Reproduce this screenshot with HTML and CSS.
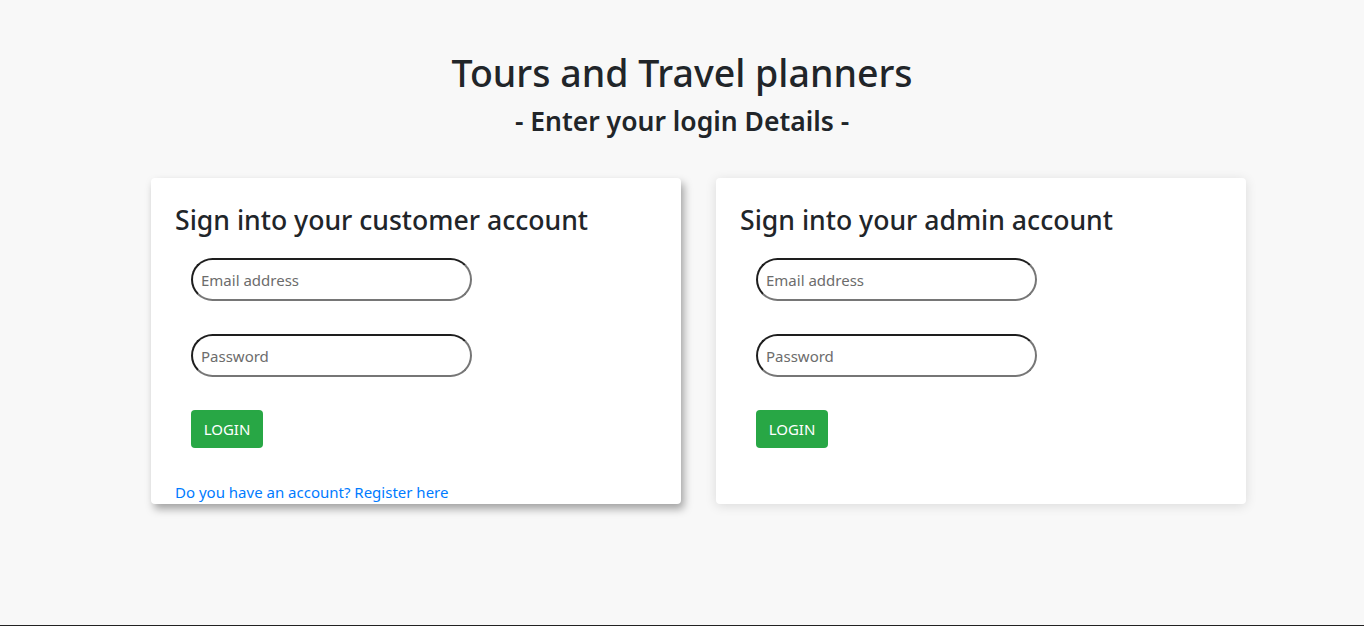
FILE: index.html
```html
<!DOCTYPE html>
<html lang="en">
<head>
<meta charset="utf-8">
<title>Tours and Travel planners</title>
<link rel="stylesheet" href="styles.css">
</head>
<body>
<header class="page-head">
  <h1 class="title">Tours and Travel planners</h1>
  <h2 class="subtitle">- Enter your login Details -</h2>
</header>
<main class="cards">
  <section class="card card-active">
    <h3 class="card-title">Sign into your customer account</h3>
    <form class="login-form">
      <input class="field" type="email" placeholder="Email address">
      <input class="field" type="password" placeholder="Password">
      <button class="btn-login" type="button">LOGIN</button>
    </form>
    <a class="register" href="#">Do you have an account? Register here</a>
  </section>
  <section class="card">
    <h3 class="card-title">Sign into your admin account</h3>
    <form class="login-form">
      <input class="field" type="email" placeholder="Email address">
      <input class="field" type="password" placeholder="Password">
      <button class="btn-login" type="button">LOGIN</button>
    </form>
  </section>
</main>
<div class="footer-strip"></div>
</body>
</html>
```

FILE: styles.css
```css
* { box-sizing: border-box; }
html, body { margin: 0; padding: 0; }
body {
  background: #f8f8f8;
  font-family: "Noto Sans", "Open Sans", sans-serif;
  color: #212529;
  height: 626px;
  overflow: hidden;
}
.page-head {
  text-align: center;
  padding-top: 49px;
}
.title {
  margin: 0;
  font-size: 37.5px;
  line-height: 48px;
  font-weight: 500;
}
.subtitle {
  margin: 7px 0 0;
  font-size: 26.5px;
  line-height: 34px;
  font-weight: 600;
}
.cards {
  display: flex;
  gap: 35px;
  margin: 40px 0 0 151px;
}
.card {
  width: 530px;
  background: #fff;
  border-radius: 4px;
  padding: 24px 24px 0;
  box-shadow: 0 2px 12px rgba(0,0,0,0.12);
}
.card-active {
  box-shadow: 3px 5px 8px rgba(0,0,0,0.35);
}
.card-title {
  margin: 0 0 20px;
  font-size: 26.6px;
  line-height: 36px;
  font-weight: 500;
}
.login-form {
  display: flex;
  flex-direction: column;
  align-items: flex-start;
  padding-left: 16px;
}
.field {
  width: 281px;
  height: 43px;
  border-radius: 22px;
  border: 2px solid;
  border-color: #1e1e1e #767676 #767676 #1e1e1e;
  padding: 0 8px;
  font-family: inherit;
  font-size: 15px;
  color: #495057;
  background: #fff;
  margin-bottom: 33px;
  outline: none;
}
.field::placeholder { color: #6c6c6c; }
.btn-login {
  width: 72px;
  height: 38px;
  background: #28a745;
  color: #fff;
  border: none;
  border-radius: 4px;
  font-family: inherit;
  font-size: 15px;
  padding: 0;
}
.register {
  display: block;
  margin-top: 32px;
  line-height: 24px;
  font-size: 15px;
  color: #007bff;
  text-decoration: none;
}
.card .login-form:last-child { padding-bottom: 56px; }
.footer-strip {
  margin-top: 121px;
  height: 1px;
  background: #222;
}
```
